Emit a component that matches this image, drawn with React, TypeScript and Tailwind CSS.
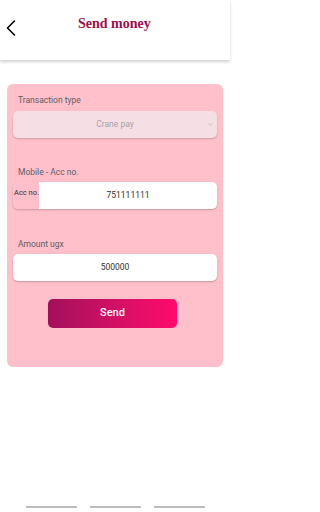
import { ChevronLeft, ChevronDown } from "lucide-react";

const labelCls =
  "pl-[5px] text-[8.5px] leading-[12px] text-[#5f5f5f] font-['Roboto',sans-serif]";

const SendMoney = () => {
  return (
    <div className="flex h-[512px] w-[230px] flex-col bg-white font-['Roboto',sans-serif]">
      {/* header */}
      <header className="relative flex h-[60px] shrink-0 items-start bg-white shadow-[0_2px_3px_rgba(0,0,0,0.18)]">
        <button className="-ml-[3px] mt-[14px] text-black">
          <ChevronLeft size={28} strokeWidth={1.3} />
        </button>
        <h1 className="ml-[53px] mt-[15px] font-['Liberation_Serif','DejaVu_Serif',serif] text-[14px] font-bold leading-[18px] text-[#9c0f4e]">
          Send money
        </h1>
      </header>

      {/* form card */}
      <main className="mx-[7px] mt-[24px] flex h-[283px] flex-col rounded-[6px] bg-[#ffc0cb] px-[6px] pt-[10px]">
        <label className={labelCls}>Transaction type</label>
        <div className="mt-[5px] flex h-[27px] items-center rounded-[5px] bg-[#f6dfe4] shadow-[0_1px_2px_rgba(0,0,0,0.2)]">
          <span className="flex-1 pl-[10px] text-center text-[8.5px] text-[#a3a3a3]">
            Crane pay
          </span>
          <ChevronDown size={7} className="mr-[3px] text-[#b0a0a4]" />
        </div>

        <label className={`${labelCls} mt-[28px]`}>Mobile - Acc no.</label>
        <div className="mt-[4px] flex h-[27px] rounded-[5px] shadow-[0_1px_2px_rgba(0,0,0,0.22)]">
          <span className="w-[26px] shrink-0 rounded-l-[5px] bg-[#ffc0cb] pl-[1px] pt-[6px] text-[7.5px] leading-[10px] text-[#333]">
            Acc no.
          </span>
          <div className="flex flex-1 items-center justify-center rounded-r-[5px] bg-white text-[8.5px] text-[#333]">
            751111111
          </div>
        </div>

        <label className={`${labelCls} mt-[29px]`}>Amount ugx</label>
        <div className="mt-[4px] flex h-[27px] items-center justify-center rounded-[5px] bg-white text-[8.5px] text-[#333] shadow-[0_1px_2px_rgba(0,0,0,0.22)]">
          500000
        </div>

        <button className="ml-[35px] mt-[18px] flex h-[29px] w-[129px] items-center justify-center rounded-[5px] bg-gradient-to-r from-[#a30f5b] to-[#ff0a6c] text-[11px] font-medium text-white">
          Send
        </button>
      </main>

      {/* home indicator */}
      <footer className="mt-auto flex justify-center gap-[13px] pb-[4px]">
        <span className="h-[2px] w-[51px] bg-[#bdbdbd]" />
        <span className="h-[2px] w-[51px] bg-[#bdbdbd]" />
        <span className="h-[2px] w-[51px] bg-[#bdbdbd]" />
      </footer>
    </div>
  );
};

export default function App() {
  return <SendMoney />;
}
